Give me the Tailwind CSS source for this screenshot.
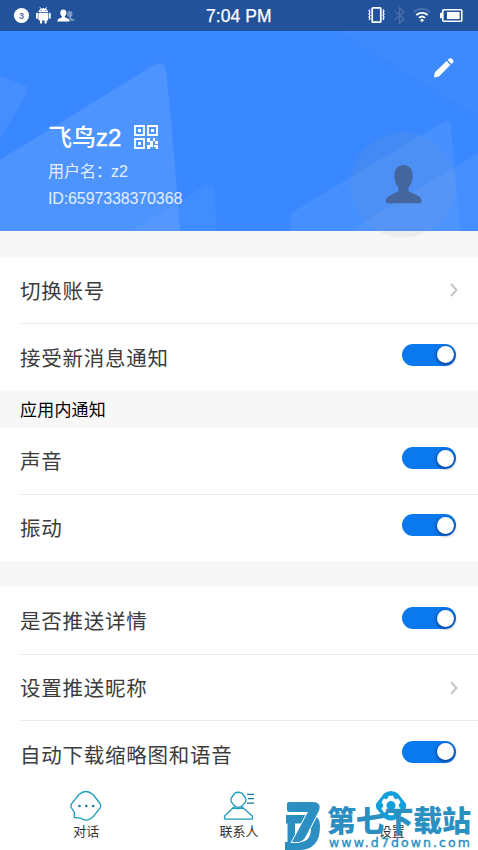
<!DOCTYPE html>
<html lang="zh-CN">
<head>
<meta charset="utf-8">
<title>设置</title>
<script src="https://cdn.jsdelivr.net/npm/@tailwindcss/browser@4"></script>
</head>
<body class="w-[478px] h-[850px] overflow-hidden bg-white font-['Liberation_Sans','Noto_Sans_CJK_SC',sans-serif]">
<div class="relative flex flex-col w-[478px] h-[850px] overflow-hidden">

  <!-- Status bar -->
  <div class="relative flex shrink-0 h-[31px] items-center justify-between bg-[#22539a] text-white">
    <svg class="w-[90px] h-[31px]" viewBox="0 0 90 31">
      <circle cx="21.5" cy="15.5" r="7.6" fill="#fff"/>
      <text x="21.5" y="18.7" font-size="9" font-weight="700" text-anchor="middle" fill="#5b6db0">3</text>
      <g fill="#fff">
        <path d="M38.4 12.3a5 5 0 0 1 9.8 0z"/>
        <path d="M39.8 7.2l1.5 2M46.8 7.2l-1.5 2" stroke="#fff" stroke-width=".8"/>
        <rect x="38.4" y="13" width="9.8" height="7.6" rx="1"/>
        <rect x="36" y="12.8" width="1.9" height="6" rx=".9"/>
        <rect x="48.8" y="12.8" width="1.9" height="6" rx=".9"/>
        <rect x="40" y="19" width="2.1" height="4.6" rx=".9"/>
        <rect x="44.6" y="19" width="2.1" height="4.6" rx=".9"/>
        <ellipse cx="63.3" cy="13" rx="3" ry="3.4"/>
        <path d="M62 15h2.8v2.3l4 1.8q.8.6.8 2.5H57.4q0-1.900.8-2.500l3.800-1.800z"/>
      </g>
      <g fill="#22539a"><circle cx="41.200" cy="10.500" r=".6"/><circle cx="45.400" cy="10.500" r=".6"/></g>
      <g fill="#fff" opacity=".4"><ellipse cx="69.800" cy="14" rx="2.700" ry="3.100"/><path d="M69 16.500h2v1.400l3 1.300q.8.500.8 1.600h-4.600z"/></g>
    </svg>
    <div class="absolute left-[206px] top-[6px] text-[17.500px] leading-[20px] tracking-[0.050px] whitespace-nowrap [-webkit-text-stroke:0.250px_white]">7:04 PM</div>
    <svg class="w-[118px] h-[31px]" viewBox="360 0 118 31" fill="none">
      <rect x="372.200" y="7.800" width="8.600" height="14.400" rx=".8" stroke="#fff" stroke-width="1.700"/>
      <path d="M370 9.500l-1 1.500 1 1.500-1 1.500 1 1.500-1 1.500 1 1.500-1 1.500M383 9.500l1 1.500-1 1.500 1 1.500-1 1.500 1 1.500-1 1.500 1 1.500" stroke="#fff" stroke-width="1.300"/>
      <path d="M395 11.500l9 7.500-4.500 4V8l4.500 4-9 7.500" stroke="#4a70ad" stroke-width="1.300"/>
      <path d="M413.800 12.200a12 12 0 0 1 16.400 0" stroke="#4a70ad" stroke-width="1.700"/>
      <path d="M416.300 15a8.500 8.500 0 0 1 11.400 0M418.900 17.900a4.700 4.700 0 0 1 6.200 0" stroke="#fff" stroke-width="1.800"/>
      <circle cx="422" cy="20.300" r="1.500" fill="#fff"/>
      <rect x="442.800" y="9.800" width="19" height="11.400" rx="1" stroke="#fff" stroke-width="1.600"/>
      <rect x="440" y="12.800" width="2.500" height="5.500" rx=".6" fill="#fff"/>
      <rect x="447" y="12" width="12.600" height="7" fill="#fff"/>
    </svg>
  </div>

  <!-- Profile header -->
  <div class="relative shrink-0 h-[200px] bg-[#3a88ff] text-white">
    <svg class="absolute left-0 top-0 w-[478px] h-[200px]" viewBox="0 31 478 200">
      <path d="M0 76l22 8q8 3 5 10L0 138z" fill="#fff" opacity=".05"/>
      <path d="M0 160L154 65q10-5 12 5l5 50 9 111H0z" fill="#fff" opacity=".1"/>
      <path d="M130 231l75-45q8-4 9 4l3 41z" fill="#fff" opacity=".04"/>
      <path d="M340 31L478 115V31z" fill="#fff" opacity=".02"/>
      <path d="M291 213l152-91q7-4 8 4l9 105H290z" fill="#fff" opacity=".06"/>
      <path d="M350 231L478 153v78z" fill="#fff" opacity=".05"/>
    </svg>
    <div class="flex flex-col pl-12 pt-[91px]">
      <div class="flex items-center h-[30px]">
        <span class="text-[24px] leading-[30px] font-medium whitespace-nowrap font-['Noto_Sans_CJK_SC',sans-serif]">飞鸟<span class="font-['Liberation_Sans'] [-webkit-text-stroke:0.500px_white]">z2</span></span>
        <svg class="ml-[13px] mt-[-1px] w-[24px] h-[24px]" viewBox="0 0 24 24" fill="none">
          <path d="M1 1h9v9H1zM14 1h9v9h-9zM1 14h9v9H1z" stroke="#fff" stroke-width="1.800"/>
          <path d="M0 0" stroke="none"/>
          <path d="M12.800 12.800h11.200v11.200H12.800z" fill="#4a92ff"/>
          <path d="M4 4h3v3H4zM17 4h3v3h-3zM4 17h3v3H4zM13 13h3v3h3v3h-3v-2h-3zM19 13h2v3h-2zM21 16h3v3h-3zM13 20h3v-1h3v3h-3v2h-3zM20 20h4v4h-2v-2h-2z" fill="#fff"/>
        </svg>
      </div>
      <div class="mt-[7px] h-[22px] text-[16px] leading-[22px] text-white/85 whitespace-nowrap font-['Noto_Sans_CJK_SC',sans-serif]">用户名：<span class="-ml-px font-['Liberation_Sans']">z2</span></div>
      <div class="mt-[7px] text-[16px] leading-[22px] tracking-[-0.120px] text-white/85 whitespace-nowrap">ID:6597338370368</div>
    </div>
    <svg class="absolute left-[433px] top-[26px] w-[22px] h-[22px]" viewBox="0 0 22 22" fill="#fff">
      <path d="M.9 20.600l1-5.300L13.600 4l3.900 3.800L5.900 19.500zM14.700 3l1.500-1.400q1.200-.9 2.300 0l1.600 1.500q1 1.200 0 2.300l-1.500 1.500z"/>
    </svg>
    <svg class="absolute z-10 left-[350px] top-[101px] w-[106px] h-[106px]" viewBox="0 0 106 106">
      <circle cx="53" cy="53" r="52.500" fill="#999" fill-opacity=".1"/>
      <path d="M53.500 33C60 33 63 38.500 62.700 45c-.2 4.500-2 8-4.200 10.500v3.500c3.500 3 12.500 3.500 13 9.500.2 2-.5 2.800-2.500 2.800H38.500c-2 0-2.700-.8-2.500-2.800.5-6 9.500-6.500 12.500-9.500v-3.500c-2.200-2.500-4-6-4.200-10.500C44 38.500 47 33 53.500 33z" fill="#44669c"/>
    </svg>
  </div>

  <div class="shrink-0 h-[26px] bg-[#f7f7f7]"></div>

  <!-- Settings list -->
  <div class="shrink-0 flex flex-col text-[20.500px] tracking-[0.750px] text-[#3c3c3c] font-['Noto_Sans_CJK_SC',sans-serif]">
    <div class="ml-5 pr-5 h-[67px] flex items-center justify-between border-b border-[#ececec]">
      <span class="mt-px">切换账号</span>
      <svg class="w-2 h-[14px]" viewBox="0 0 8 14" fill="none" stroke="#c6c6c6" stroke-width="2"><path d="M1 1l5.500 6L1 13"/></svg>
    </div>
    <div class="ml-5 pr-[22px] h-[67px] flex items-center justify-between">
      <span>接受新消息通知</span>
      <span class="mb-[6px] flex justify-end items-center w-[54px] h-[22px] rounded-full bg-[#0b79ee] pr-[2px]"><span class="w-[17px] h-[17px] rounded-full bg-white shadow-[0_1px_3px_1px_rgba(0,20,80,0.500)]"></span></span>
    </div>
    <div class="h-[37px] bg-[#f7f7f7] pl-5 pb-[2px] flex items-center text-[17px] tracking-[0.200px] text-black">应用内通知</div>
    <div class="ml-5 pr-[22px] h-[67px] flex items-center justify-between border-b border-[#ececec]">
      <span class="mb-[2px]">声音</span>
      <span class="mb-[6px] flex justify-end items-center w-[54px] h-[22px] rounded-full bg-[#0b79ee] pr-[2px]"><span class="w-[17px] h-[17px] rounded-full bg-white shadow-[0_1px_3px_1px_rgba(0,20,80,0.500)]"></span></span>
    </div>
    <div class="ml-5 pr-[22px] h-[66px] flex items-center justify-between">
      <span class="mb-[2px]">振动</span>
      <span class="mb-[6px] flex justify-end items-center w-[54px] h-[22px] rounded-full bg-[#0b79ee] pr-[2px]"><span class="w-[17px] h-[17px] rounded-full bg-white shadow-[0_1px_3px_1px_rgba(0,20,80,0.500)]"></span></span>
    </div>
    <div class="h-[26px] bg-[#f7f7f7]"></div>
    <div class="ml-5 pr-[22px] h-[68px] flex items-center justify-between border-b border-[#ececec]">
      <span class="mb-px">是否推送详情</span>
      <span class="mb-[5px] flex justify-end items-center w-[54px] h-[22px] rounded-full bg-[#0b79ee] pr-[2px]"><span class="w-[17px] h-[17px] rounded-full bg-white shadow-[0_1px_3px_1px_rgba(0,20,80,0.500)]"></span></span>
    </div>
    <div class="ml-5 pr-5 h-[66px] flex items-center justify-between border-b border-[#ececec]">
      <span class="mb-px">设置推送昵称</span>
      <svg class="w-2 h-[14px]" viewBox="0 0 8 14" fill="none" stroke="#c6c6c6" stroke-width="2"><path d="M1 1l5.500 6L1 13"/></svg>
    </div>
    <div class="ml-5 pr-[22px] h-[67px] flex items-center justify-between">
      <span>自动下载缩略图和语音</span>
      <span class="mb-[6px] flex justify-end items-center w-[54px] h-[22px] rounded-full bg-[#0b79ee] pr-[2px]"><span class="w-[17px] h-[17px] rounded-full bg-white shadow-[0_1px_3px_1px_rgba(0,20,80,0.500)]"></span></span>
    </div>
  </div>

  <!-- Tab bar -->
  <div class="shrink-0 h-[62px] px-[10px] grid grid-cols-3 bg-white text-[13px] leading-[18px] text-[#333] font-['Noto_Sans_CJK_SC',sans-serif]">
    <div class="flex flex-col items-center pt-[2px]">
      <svg class="w-8 h-8" viewBox="0 0 32 32" fill="none">
        <path d="M4.300 27.500v-5.300L1.500 18q-1.300-2.200.2-4.300L9 4.500Q16-1.500 23 4.500l7 9q1.500 2.300 0 4.600l-7.200 9Q17 32.500 10.500 28.200z" stroke="#1b9cb8" stroke-width="1.300" stroke-linejoin="round"/>
        <g fill="#17789b"><circle cx="9.500" cy="16" r="1.300"/><circle cx="16.300" cy="16" r="1.300"/><circle cx="23.200" cy="16" r="1.300"/></g>
      </svg>
      <span>对话</span>
    </div>
    <div class="flex flex-col items-center pt-[2px]">
      <svg class="w-8 h-8" viewBox="0 0 32 32" fill="none" stroke="#1b9cb8" stroke-width="1.300" stroke-linejoin="round">
        <path d="M11.500 3.500q3.800-2.500 7.800 0L22.500 8q1 2 0 3.800l-3.200 4q-4 3-7.800 0L8.300 11.800Q7.400 9.800 8.300 8z"/>
        <path d="M10.700 17.200L1.600 26q-.7 3.200 1.500 3.200h25q2 0 1.200-3.200L19.500 17.200q-4.200 3-8.800 0z"/>
        <path d="M24 4.300h7M25 8.700h6M24 13.200h7" stroke="#17789b"/>
      </svg>
      <span>联系人</span>
    </div>
    <div class="flex flex-col items-center pt-[2px]">
      <svg class="mr-[2px] w-8 h-8" viewBox="0 0 32 32">
        <path d="M9 3.500q7-5 14 0l7.500 9.700q1.300 2.600 0 5.300L23 28q-7 5-14 0L1.500 18.500q-1.300-2.700 0-5.300z" fill="#109fda"/>
        <circle cx="16" cy="15.500" r="6.300" stroke="#fff" stroke-width="3.600" fill="none"/>
        <path d="M14.500 7h3M14.500 24h3M7.900 12.500l1.500-2.600M22.600 21.100l1.500-2.600M24.100 12.500l-1.500-2.600M9.400 21.100l-1.500-2.600" stroke="#fff" stroke-width="2.600" stroke-linecap="round"/>
      </svg>
      <span>设置</span>
    </div>
  </div>

  <!-- Site watermark -->
  <svg class="absolute left-[278px] top-[790px] w-[200px] h-[60px]" viewBox="278 790 200 60" fill="#2b8fc2">
    <path d="M286 815h27q7 2 7 11 0 24-21 24h-14v-8h2.500v-18.500H286zM295 823.500v18.500h6q10-1 10-14 0-4.500-3-4.500z" fill-rule="evenodd"/>
    <path d="M289 802h24q7.500 0 6.500 6.500-.3 2-1.500 4L306 836q-3 6-9 6h-5l16-30h-19q-2 0-2-2v-6q0-2 2-2z" stroke="#fff" stroke-width="1.800" paint-order="stroke"/>
    <text x="327" y="831.500" font-size="29" font-weight="900" font-family="'Noto Sans CJK SC',sans-serif" textLength="144">第七下载站</text>
    <text x="329" y="847" font-size="12.500" font-family="'DejaVu Sans',sans-serif" textLength="141" stroke="#2b8fc2" stroke-width=".4">www.d7down.com</text>
  </svg>
</div>
</body>
</html>
